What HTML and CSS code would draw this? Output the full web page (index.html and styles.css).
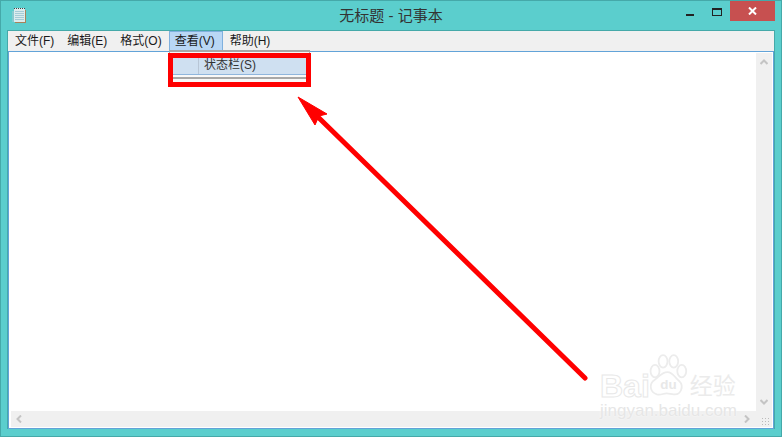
FILE: index.html
```html
<!DOCTYPE html>
<html lang="zh-CN">
  <head>
    <meta charset="UTF-8" />
    <title>无标题 - 记事本</title>
    <link rel="stylesheet" href="styles.css">
  </head>
  <body>
    <div class="window">
      <div class="titlebar">
        <svg class="appicon" width="16" height="18" viewBox="0 0 16 18">
          <rect x="4" y="3" width="11" height="13" fill="#a9835a"/>
          <rect x="1" y="4" width="4" height="11" fill="#86cbd0"/>
          <rect x="3" y="1" width="11" height="14" fill="#dcecee"/>
          <path d="M4 4.500h9M4 6.500h9M4 8.500h9M4 10.500h9M4 12.500h9" stroke="#a5ccd6"/>
          <path d="M3 1.500h11" stroke="#444" stroke-dasharray="1 1"/>
        </svg>
        <div class="title">无标题 - 记事本</div>
        <div class="controls">
          <div class="btn"><span class="minimize"></span></div>
          <div class="btn"><span class="maximize"></span></div>
          <div class="close">
            <svg width="9" height="8" viewBox="0 0 9 8"><path d="M1 0.500l7 7M8 0.500l-7 7" stroke="#fff" stroke-width="2"/></svg>
          </div>
        </div>
      </div>
      <div class="client">
        <ul class="menubar">
          <li>文件(F)</li>
          <li>编辑(E)</li>
          <li>格式(O)</li>
          <li class="active">查看(V)</li>
          <li>帮助(H)</li>
        </ul>
        <div class="editor">
          <div class="middle">
            <div class="page"></div>
            <div class="vscroll">
              <svg width="8" height="6" viewBox="0 0 8 6"><path d="M0.500 5l3.500-3.500 3.500 3.500" fill="none" stroke="#c4c4c4" stroke-width="2"/></svg>
              <svg width="8" height="6" viewBox="0 0 8 6"><path d="M0.500 1l3.500 3.500 3.500-3.500" fill="none" stroke="#c4c4c4" stroke-width="2"/></svg>
            </div>
          </div>
          <div class="hscroll">
            <svg width="6" height="8" viewBox="0 0 6 8"><path d="M5 0.500l-3.500 3.500 3.500 3.500" fill="none" stroke="#c4c4c4" stroke-width="2"/></svg>
            <svg width="6" height="8" viewBox="0 0 6 8"><path d="M1 0.500l3.500 3.500-3.500 3.500" fill="none" stroke="#c4c4c4" stroke-width="2"/></svg>
            <div class="grip"></div>
          </div>
        </div>
      </div>
    </div>

    <!-- 下拉菜单 -->
    <div class="dropdown">
      <div class="item"><span class="gutter"></span><span class="label">状态栏(S)</span></div>
      <div class="sep"></div>
    </div>
    <div class="redbox"></div>

    <svg class="arrow" width="782" height="437" viewBox="0 0 782 437">
      <path d="M585 378L318 117" stroke="#f00" stroke-width="5" stroke-linecap="round"/>
      <path d="M298 97L327 114L319 116L315 125Z" fill="#f00" stroke="#f00" stroke-linejoin="round"/>
    </svg>

    <!-- 水印 -->
    <div class="watermark">
      <div class="wm-top">
        <span class="wm-bai">Bai</span>
        <svg class="wm-paw" width="41" height="45" viewBox="0 0 46 50">
          <g fill="#fff" stroke="#ececec" stroke-width="2">
            <ellipse cx="9" cy="19" rx="5" ry="7"/>
            <ellipse cx="18" cy="8" rx="5" ry="7"/>
            <ellipse cx="30" cy="8" rx="5" ry="7"/>
            <ellipse cx="39" cy="19" rx="5" ry="7"/>
            <path d="M23 20c6 0 8 6 13 10 6 6 2 16-6 15-3 0-5-1-8-1-4 0-6 2-11 1-7-2-9-10-4-15 6-4 9-10 16-10z"/>
          </g>
          <text x="24" y="39" text-anchor="middle" class="wm-du">du</text>
        </svg>
        <span class="wm-jy">经验</span>
      </div>
      <div class="wm-url">jingyan.baidu.com</div>
    </div>
  </body>
</html>
```

FILE: styles.css
```css
* {
  margin: 0;
  padding: 0;
  box-sizing: border-box;
}
body {
  width: 782px;
  height: 437px;
  overflow: hidden;
  font-family: "Liberation Sans", "Noto Sans CJK SC", sans-serif;
  background: #5bcecd;
}
.window {
  width: 782px;
  height: 437px;
  display: flex;
  flex-direction: column;
  border: 1px solid #45a9a9;
  padding: 0 6px 7px;
}
.titlebar {
  height: 29px;
  display: grid;
  grid-template-columns: 1fr auto 1fr;
  flex-shrink: 0;
}
.appicon {
  margin: 6px 0 0 4px;
}
.title {
  margin-top: 5px;
  font-size: 15px;
  line-height: 20px;
  color: #333;
}
.controls {
  justify-self: end;
  display: flex;
  height: 21px;
}
.btn {
  width: 27px;
  height: 21px;
  display: flex;
  align-items: center;
  justify-content: center;
}
.minimize {
  width: 8px;
  height: 2px;
  background: #222;
  margin-top: 6px;
}
.maximize {
  width: 10px;
  height: 8px;
  border: 1px solid #222;
  border-top-width: 2px;
}
.close {
  width: 45px;
  height: 20px;
  background: #c75050;
  display: flex;
  align-items: center;
  justify-content: center;
}
.client {
  flex: 1;
  display: flex;
  flex-direction: column;
  min-height: 0;
  border: 1px solid #45a9a9;
  border-bottom: 0;
}
.menubar {
  height: 20px;
  list-style: none;
  display: flex;
  background: #f0f0f0;
  font-size: 12px;
  color: #1a1a1a;
  flex-shrink: 0;
}
.menubar li {
  height: 20px;
  line-height: 21px;
  padding: 0 6px 0 7px;
  white-space: nowrap;
}
.menubar li.active {
  width: 54px;
  margin-left: 1px;
  background: #b9d7f5;
  border: 1px solid #7fb0de;
  line-height: 19px;
  padding: 0 0 0 5px;
}
.editor {
  flex: 1;
  display: flex;
  flex-direction: column;
  min-height: 0;
  background: #fff;
  border: 1px solid #62a3d8;
  padding: 1px;
}
.middle {
  flex: 1;
  display: flex;
  min-height: 0;
}
.page {
  flex: 1;
  background: #fff;
}
.vscroll {
  width: 16px;
  background: #f0f0f0;
  display: flex;
  flex-direction: column;
  justify-content: space-between;
  align-items: center;
  padding: 6px 0 6px;
}
.hscroll {
  height: 16px;
  margin-left: 1px;
  background: #f0f0f0;
  display: flex;
  align-items: center;
  justify-content: space-between;
  padding: 0 22px 0 5px;
  position: relative;
}
.grip {
  position: absolute;
  right: 3px;
  bottom: 2px;
  width: 8px;
  height: 8px;
  background: radial-gradient(circle, #bbb 1px, transparent 1px) 0 0 / 3px 3px;
}
.dropdown {
  position: absolute;
  left: 169px;
  top: 50px;
  width: 141px;
  height: 32px;
  background: #f8f8f8;
  border-top: 2px solid #a8a8a8;
  border-right: 1px solid #a8a8a8;
  border-left: 1px solid #a8a8a8;
  padding: 6px 3px 0;
}
.item {
  height: 17px;
  background: #cfe0f1;
  border-bottom: 1px solid #8fb6dd;
  display: flex;
  font-size: 12px;
  line-height: 15px;
  color: #333;
}
.gutter {
  width: 26px;
  border-right: 1px solid #b8c6d6;
}
.label {
  padding-left: 5px;
}
.sep {
  height: 2px;
  margin-top: 2px;
  background: #a8a8a8;
}
.redbox {
  position: absolute;
  left: 168px;
  top: 53px;
  width: 143px;
  height: 34px;
  border: 5px solid #f00;
}
.arrow {
  position: absolute;
  left: 0;
  top: 0;
}
.watermark {
  position: absolute;
  left: 600px;
  top: 354px;
  color: #e8e8e8;
}
.wm-top {
  display: flex;
  align-items: flex-end;
  height: 45px;
}
.wm-bai {
  font-size: 32px;
  line-height: 32px;
  font-weight: bold;
  margin-bottom: -3px;
  color: #fff;
  -webkit-text-stroke: 1px #e8e8e8;
}
.wm-paw {
  margin-left: -3px;
  flex-shrink: 0;
}
.wm-du {
  font-size: 15px;
  font-weight: bold;
  fill: #e8e8e8;
}
.wm-jy {
  font-size: 23px;
  line-height: 23px;
  margin-left: 2px;
  margin-bottom: 1px;
  white-space: nowrap;
  color: #ebebeb;
}
.wm-url {
  font-size: 17px;
  line-height: 20px;
  margin-top: 2px;
  white-space: nowrap;
  color: #e6e6e6;
  text-shadow: 0 0 2px #fff;
}
```
